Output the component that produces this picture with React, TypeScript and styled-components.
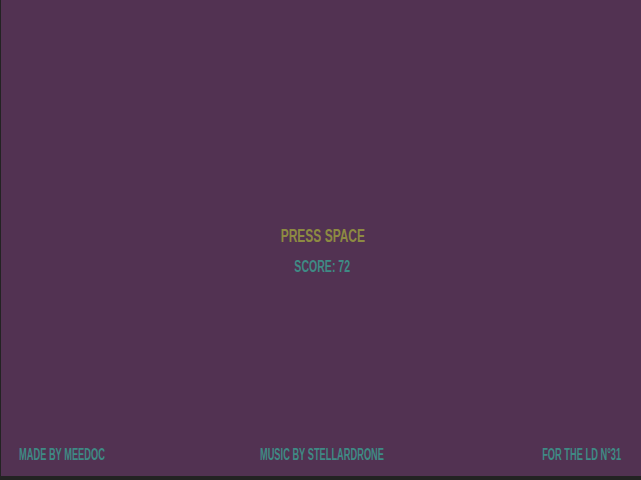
import React from 'react'
import styled, { createGlobalStyle } from 'styled-components'

const Global = createGlobalStyle`
  html, body {
    margin: 0;
    padding: 0;
    background: #232323;
  }
  #root {
    width: 641px;
    height: 480px;
  }
`

const Screen = styled.div`
  width: 640px;
  height: 476px;
  margin-left: 1px;
  background: #523252;
  display: flex;
  flex-direction: column;
  font-family: 'Liberation Sans', Arial, sans-serif;
  font-weight: bold;
  text-transform: uppercase;
`

const Center = styled.div`
  flex: 1;
  display: flex;
  flex-direction: column;
  align-items: center;
  justify-content: center;
  padding-top: 54px;
  padding-left: 3px;
`

const Squeeze = styled.span<{ $size: number; $color: string; $scale: number }>`
  display: block;
  font-size: ${p => p.$size}px;
  line-height: 1;
  color: ${p => p.$color};
  transform: scaleX(${p => p.$scale});
  white-space: nowrap;
`

const Gap = styled.div`
  height: 14px;
`

const Footer = styled.div`
  display: grid;
  grid-template-columns: 1fr auto 1fr;
  align-items: center;
  padding: 0 20px 13px 18px;
  height: 17px;
`

const FooterText = styled(Squeeze)<{ $align: 'left' | 'center' | 'right' }>`
  transform-origin: ${p => p.$align} center;
  justify-self: ${p => (p.$align === 'left' ? 'start' : p.$align === 'right' ? 'end' : 'center')};
  margin-left: ${p => (p.$align === 'center' ? '3px' : '0')};
`

export default function App() {
  return (
    <>
      <Global />
      <Screen>
        <Center>
          <Squeeze $size={19} $color="#8d8a42" $scale={0.63}>
            Press Space
          </Squeeze>
          <Gap />
          <Squeeze $size={16} $color="#3f8a85" $scale={0.66}>
            Score: 72
          </Squeeze>
        </Center>
        <Footer>
          <FooterText $size={16} $color="#3f8a85" $scale={0.58} $align="left">
            Made by Meedoc
          </FooterText>
          <FooterText $size={16} $color="#3f8a85" $scale={0.58} $align="center">
            Music by Stellardrone
          </FooterText>
          <FooterText $size={16} $color="#3f8a85" $scale={0.58} $align="right">
            For the LD N°31
          </FooterText>
        </Footer>
      </Screen>
    </>
  )
}
